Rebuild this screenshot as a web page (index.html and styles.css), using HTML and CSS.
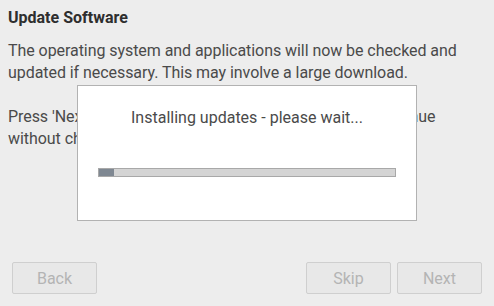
FILE: index.html
```html
<!DOCTYPE html>
<html lang="en">
<head>
    <meta charset="UTF-8">
    <title>Update Software</title>
    <link rel="stylesheet" href="styles.css">
</head>
<body>
    <div class="wizard">
        <div class="page">
            <h1>Update Software</h1>
            <p>The operating system and applications will now be checked and updated if necessary. This may involve a large download.</p>
            <p>Press 'Next' to check and install updates, or 'Skip' to continue without checking.</p>
        </div>
        <div class="buttons">
            <button disabled>Back</button>
            <div class="spacer"></div>
            <button disabled>Skip</button>
            <button disabled>Next</button>
        </div>
    </div>

    <div class="dialog">
        <div class="dialog-message">Installing updates - please wait...</div>
        <div class="progress"><div class="progress-fill"></div></div>
    </div>
</body>
</html>
```

FILE: styles.css
```css
body {
    margin: 0;
    width: 494px;
    height: 306px;
    background-color: #ededed;
    font-family: Roboto, "Liberation Sans", sans-serif;
    color: #4a4a4a;
    overflow: hidden;
}

.wizard {
    display: flex;
    flex-direction: column;
    height: 306px;
}

.page {
    flex: 1;
    padding: 8px 8px 0 8px;
}

h1 {
    font-size: 16px;
    font-weight: bold;
    color: #2e2e2e;
    margin: 0 0 12px 0;
    line-height: 20px;
}

p {
    font-size: 16px;
    line-height: 22px;
    letter-spacing: -0.06px;
    margin: 0 0 22px 0;
}

.buttons {
    display: flex;
    gap: 6px;
    padding: 0 12px 12px 12px;
}

.spacer {
    flex: 1;
}

button {
    width: 85px;
    height: 32px;
    font-family: Roboto, "Liberation Sans", sans-serif;
    font-size: 16px;
    color: #b4b4b4;
    background-color: #e8e8e8;
    border: 1px solid #cfcfcf;
    border-radius: 2px;
    padding: 0;
}

.dialog {
    position: absolute;
    left: 77px;
    top: 85px;
    width: 338px;
    height: 134px;
    background-color: #ffffff;
    border: 1px solid #b2b2b2;
}

.dialog-message {
    text-align: center;
    font-size: 16px;
    color: #4a4a4a;
    margin-top: 21px;
    line-height: 22px;
}

.progress {
    margin: 39px 0 0 20px;
    width: 296px;
    height: 7px;
    background-color: #d4d4d4;
    border: 1px solid #a8a8a8;
}

.progress-fill {
    width: 15px;
    height: 7px;
    background-color: #7f8892;
}
```
